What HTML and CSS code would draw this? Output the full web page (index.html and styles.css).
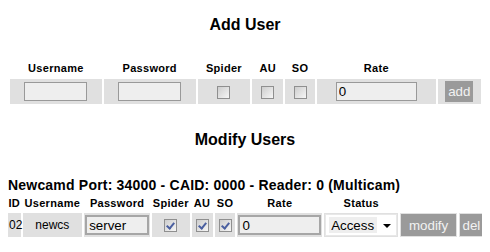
FILE: index.html
```html
<!DOCTYPE html>
<html lang="en">
  <head>
    <meta charset="UTF-8" />
    <title>Newcs Users</title>
    <link rel="stylesheet" href="styles.css">
  </head>
  <body>
    <h3 class="title">Add User</h3>
    <form class="add-form" autocomplete="off">
      <table class="users add-table">
        <colgroup>
          <col style="width: 89px" />
          <col style="width: 89px" />
          <col style="width: 51px" />
          <col style="width: 30px" />
          <col style="width: 29px" />
          <col style="width: 115px" />
          <col style="width: 42px" />
        </colgroup>
        <tr class="head">
          <th>Username</th>
          <th>Password</th>
          <th>Spider</th>
          <th>AU</th>
          <th>SO</th>
          <th>Rate</th>
          <th></th>
        </tr>
        <tr class="row">
          <td><input type="text" class="field short" name="user" /></td>
          <td><input type="password" class="field short" name="pass" /></td>
          <td><input type="checkbox" name="spider" /></td>
          <td><input type="checkbox" name="au" /></td>
          <td><input type="checkbox" name="so" /></td>
          <td><input type="text" class="field rate" name="rate" value="0" /></td>
          <td><button type="submit" class="btn">add</button></td>
        </tr>
      </table>
    </form>

    <h3 class="title modify">Modify Users</h3>
    <h4 class="group">Newcamd Port: 34000 - CAID: 0000 - Reader: 0 (Multicam)</h4>
    <form class="edit-form" autocomplete="off">
      <table class="users edit-table">
        <colgroup>
          <col style="width: 12px" />
          <col style="width: 57px" />
          <col style="width: 63px" />
          <col style="width: 36px" />
          <col style="width: 20px" />
          <col style="width: 20px" />
          <col style="width: 81px" />
          <col style="width: 71px" />
          <col style="width: 54px" />
          <col style="width: 24px" />
        </colgroup>
        <tr class="head">
          <th>ID</th>
          <th>Username</th>
          <th>Password</th>
          <th>Spider</th>
          <th>AU</th>
          <th>SO</th>
          <th>Rate</th>
          <th>Status</th>
          <th></th>
          <th></th>
        </tr>
        <tr class="row">
          <td class="id">02</td>
          <td class="name">newcs</td>
          <td><input type="text" class="field wide" name="pass" value="server" /></td>
          <td><input type="checkbox" name="spider" checked /></td>
          <td><input type="checkbox" name="au" checked /></td>
          <td><input type="checkbox" name="so" checked /></td>
          <td><input type="text" class="field wide" name="rate" value="0" /></td>
          <td>
            <span class="select-wrap">
              <select name="status" class="status">
                <option selected>Access</option>
                <option>Denied</option>
              </select>
            </span>
          </td>
          <td><button type="submit" class="btn">modify</button></td>
          <td><button type="button" class="btn">del</button></td>
        </tr>
      </table>
    </form>
  </body>
</html>
```

FILE: styles.css
```css
body {
  margin: 8px;
  font-family: "Liberation Sans", Arial, sans-serif;
  font-size: 12px;
  color: #000;
  background: #fff;
}
.title {
  margin: 8px 0 0;
  font-size: 16px;
  line-height: 18px;
  text-align: center;
}
.title.modify {
  margin-top: 25px;
}
.group {
  margin: 28px 0 0;
  font-size: 14px;
  line-height: 16px;
  letter-spacing: 0.2px;
}
form {
  margin: 0;
}
.users {
  table-layout: fixed;
  border-collapse: separate;
  border-spacing: 2px;
}
.add-table {
  width: 475px;
  margin: 24px auto 0;
}
.edit-table {
  width: 480px;
  margin: 1px 0 0 -2px;
}
.users th {
  padding: 2px 0;
  font-size: 11px;
  line-height: 13px;
  letter-spacing: 0.3px;
  text-align: center;
  white-space: nowrap;
}
.edit-table th {
  padding: 1px 0;
}
.users td {
  background: #e0e0e0;
  text-align: center;
  vertical-align: middle;
  white-space: nowrap;
}
.add-table td {
  padding: 2px 1px;
  height: 21px;
}
.edit-table td {
  padding: 1px;
  height: 22px;
}
.edit-table td.id {
  text-align: left;
  padding-left: 1px;
}
.field {
  box-sizing: border-box;
  height: 19px;
  margin: 0;
  padding: 0 2px;
  border: 1px solid #999;
  background: #eee;
  font-family: "Liberation Sans", Arial, sans-serif;
  font-size: 13.33px;
  vertical-align: middle;
  outline: none;
}
.field.short {
  width: 63px;
}
.field.rate {
  width: 81px;
}
.field.wide {
  width: 100%;
  height: 20px;
  border: 2px solid #a6a6a6;
  padding: 0 2px;
}
input[type="checkbox"] {
  appearance: none;
  position: relative;
  box-sizing: border-box;
  width: 13px;
  height: 13px;
  margin: 0;
  border: 1px solid #8f8f8f;
  background: linear-gradient(135deg, #cdcdcd 0%, #f6f6f6 100%);
  vertical-align: middle;
}
input[type="checkbox"]:checked::after {
  content: "";
  position: absolute;
  left: 3px;
  top: 1px;
  width: 3px;
  height: 6px;
  border: solid #4a5fa0;
  border-width: 0 2px 2px 0;
  transform: rotate(40deg);
}
.btn {
  margin: 0;
  padding: 0 3px;
  border: none;
  background: #9a9a9a;
  color: #f2f2f2;
  font-family: "Liberation Sans", Arial, sans-serif;
  font-size: 13.33px;
  height: 21px;
  vertical-align: middle;
  cursor: pointer;
}
.edit-table .btn {
  width: 100%;
  height: 22px;
  padding: 0;
  overflow: visible;
}
.select-wrap {
  position: relative;
  display: block;
}
.select-wrap::after {
  content: "";
  position: absolute;
  right: 6px;
  top: 10px;
  border: 4px solid transparent;
  border-top: 4px solid #000;
  border-bottom: 0;
}
.status {
  appearance: none;
  box-sizing: border-box;
  width: 100%;
  height: 22px;
  margin: 0;
  padding: 0 0 0 5px;
  border: 1px solid #e8e8e8;
  background: linear-gradient(#eee, #eee) 3px 2px / 48px 16px no-repeat, #fff;
  font-family: "Liberation Sans", Arial, sans-serif;
  font-size: 13.33px;
  color: #000;
  outline: none;
}
```
